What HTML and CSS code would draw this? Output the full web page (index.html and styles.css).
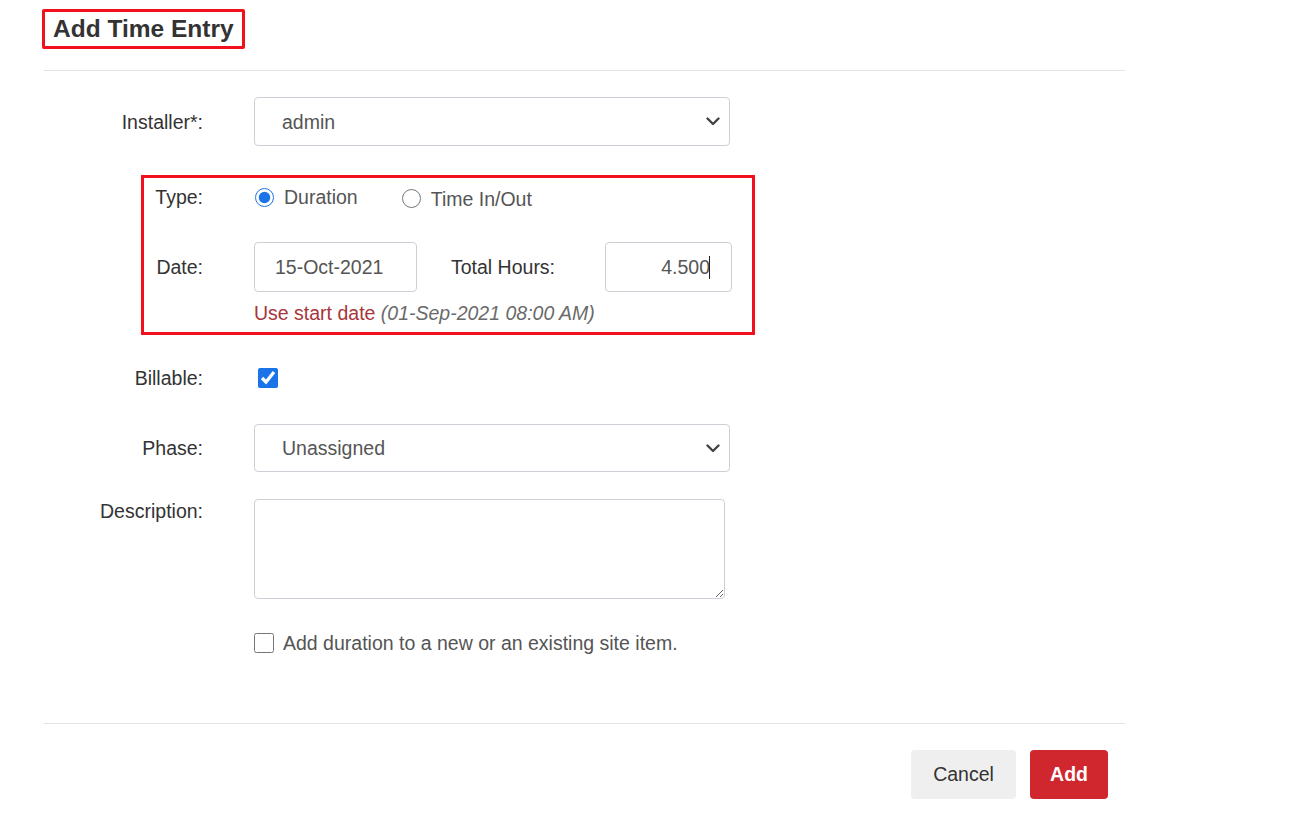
FILE: index.html
```html
<!DOCTYPE html>
<html lang="en">
<head>
  <meta charset="UTF-8">
  <title>Add Time Entry</title>
  <link rel="stylesheet" href="styles.css">
</head>
<body>
  <div class="dialog">
    <div class="dialog-header">
      <h1 class="title-box">Add Time Entry</h1>
    </div>

    <div class="dialog-body">
      <div class="row row-installer">
        <label class="lbl">Installer*:</label>
        <div class="select-wrap">
          <select class="field">
            <option>admin</option>
          </select>
          <svg class="chev" width="14" height="9" viewBox="0 0 14 9"><path d="M1.5 1.5 L7 7 L12.5 1.5" fill="none" stroke="#444" stroke-width="2.4" stroke-linecap="round" stroke-linejoin="round"/></svg>
        </div>
      </div>

      <div class="highlight">
        <div class="row row-type">
          <span class="lbl">Type:</span>
          <label class="opt"><input type="radio" name="type" checked> Duration</label>
          <label class="opt opt-second"><input type="radio" name="type"> Time In/Out</label>
        </div>
        <div class="row row-date">
          <label class="lbl">Date:</label>
          <input class="field date" type="text" value="15-Oct-2021">
          <label class="hours-lbl">Total Hours:</label>
          <div class="hours-wrap">
            <input class="field hours" type="text" value="4.500">
          </div>
        </div>
        <div class="hint">Use start date <em>(01-Sep-2021 08:00 AM)</em></div>
      </div>

      <div class="row row-billable">
        <label class="lbl">Billable:</label>
        <input class="check billable" type="checkbox" checked>
      </div>

      <div class="row row-phase">
        <label class="lbl">Phase:</label>
        <div class="select-wrap">
          <select class="field">
            <option>Unassigned</option>
          </select>
          <svg class="chev" width="14" height="9" viewBox="0 0 14 9"><path d="M1.5 1.5 L7 7 L12.5 1.5" fill="none" stroke="#444" stroke-width="2.4" stroke-linecap="round" stroke-linejoin="round"/></svg>
        </div>
      </div>

      <div class="row row-desc">
        <label class="lbl">Description:</label>
        <textarea class="field desc"></textarea>
      </div>

      <div class="row row-site">
        <label class="opt"><input class="check" type="checkbox"> Add duration to a new or an existing site item.</label>
      </div>
    </div>

    <div class="dialog-footer">
      <button class="btn btn-cancel">Cancel</button>
      <button class="btn btn-add">Add</button>
    </div>
  </div>
</body>
</html>
```

FILE: styles.css
```css
body {
  margin: 0;
  font-family: 'Liberation Sans', Arial, sans-serif;
  font-size: 19.5px;
  color: #333;
  background: #fff;
}
.dialog {
  margin-left: 44px;
  width: 1081px;
}
.dialog-header {
  padding: 9px 0 21px 0;
  border-bottom: 1px solid #e3e3e3;
}
.title-box {
  display: inline-block;
  margin: 0 0 0 -2px;
  padding: 0 8px;
  border: 3px solid #f2101c;
  border-radius: 2px;
  font-size: 24.5px;
  line-height: 34px;
  font-weight: bold;
  color: #333;
}
.dialog-body {
  padding-bottom: 69px;
}
.row {
  display: flex;
  align-items: center;
}
.lbl {
  width: 159px;
  margin-right: 51px;
  text-align: right;
  line-height: 22px;
  flex-shrink: 0;
}
.field {
  box-sizing: border-box;
  font-family: inherit;
  font-size: 19.5px;
  color: #555;
  border: 1px solid #ccd0d6;
  border-radius: 4px;
  background: #fff;
  outline: none;
}
.select-wrap {
  position: relative;
}
.select-wrap select {
  appearance: none;
  -webkit-appearance: none;
  width: 476px;
  height: 49px;
  padding: 0 0 0 27px;
}
.chev {
  position: absolute;
  right: 10px;
  top: 20px;
  pointer-events: none;
}
.row-installer {
  margin-top: 26px;
}

/* highlighted type / date block */
.highlight {
  box-sizing: border-box;
  margin-left: 97px;
  margin-top: 29px;
  width: 614px;
  padding: 8px 0 8px 0;
  border: 3px solid #f2101c;
}
.highlight .lbl {
  width: 59px;
}
.row-type {
  height: 22px;
}
.opt {
  display: flex;
  align-items: center;
  line-height: 22px;
  color: #555;
}
.opt input[type=radio] {
  width: 19px;
  height: 19px;
  margin: 0 10px 0 1px;
  accent-color: #1a73e8;
}
.opt-second {
  margin-left: 43px;
  margin-top: 3px;
}
.row-date {
  margin-top: 34px;
}
.date {
  width: 163px;
  height: 50px;
  padding: 0 0 0 20px;
}
.hours-lbl {
  margin-left: 34px;
  width: 154px;
  line-height: 22px;
}
.hours-wrap {
  position: relative;
}
.hours {
  width: 127px;
  height: 50px;
  padding: 0 21px 0 0;
  text-align: right;
}
.hours-wrap::after {
  content: "";
  position: absolute;
  right: 22px;
  top: 14px;
  width: 1.5px;
  height: 23px;
  background: #222;
}
.hint {
  margin: 10px 0 0 110px;
  line-height: 22px;
  color: #a8353a;
}
.hint em {
  color: #6a6a6a;
}

.check {
  width: 20px;
  height: 20px;
  margin: 0;
  accent-color: #1a73e8;
}
.row-billable {
  margin-top: 32px;
}
.billable {
  margin-left: 4px;
}
.row-phase {
  margin-top: 35px;
}
.row-phase select {
  height: 48px;
}
.row-desc {
  margin-top: 27px;
  align-items: flex-start;
}
.row-desc .lbl {
  padding-top: 1px;
}
.desc {
  width: 471px;
  height: 100px;
  resize: both;
}
.row-site {
  margin-top: 33px;
  padding-left: 210px;
}
.row-site .check {
  margin-right: 9px;
}

.dialog-footer {
  display: flex;
  justify-content: flex-end;
  gap: 14px;
  padding: 26px 17px 0 0;
  border-top: 1px solid #e3e3e3;
}
.btn {
  height: 49px;
  border: none;
  border-radius: 4px;
  font-family: inherit;
  font-size: 19.5px;
  cursor: pointer;
}
.btn-cancel {
  width: 105px;
  background: #efefef;
  color: #333;
}
.btn-add {
  width: 78px;
  background: #d0262d;
  color: #fff;
  font-weight: bold;
}
```
